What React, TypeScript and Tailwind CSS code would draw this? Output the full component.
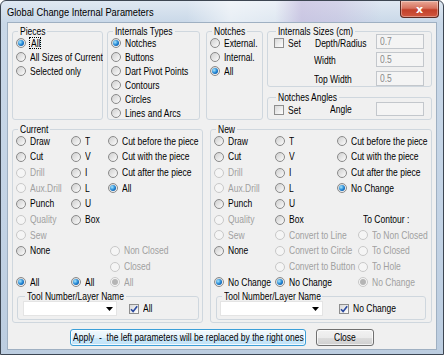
import { useLayoutEffect, useRef, useState } from 'react';
import type { ReactNode } from 'react';

const FONT = "font-['Liberation_Sans',Arial,sans-serif]";
const SX = 0.81;

// The dialog font is a narrow one; squeeze Liberation Sans and shrink its layout box to match.
function N({ children, pre }: { children: ReactNode; pre?: boolean }) {
  const ref = useRef<HTMLSpanElement>(null);
  const [mr, setMr] = useState(0);
  useLayoutEffect(() => {
    if (ref.current) setMr(-ref.current.offsetWidth * (1 - SX));
  }, []);
  return (
    <span
      ref={ref}
      className={`inline-block origin-left scale-x-[0.81] ${pre ? 'whitespace-pre' : 'whitespace-nowrap'}`}
      style={{ marginRight: mr }}
    >
      {children}
    </span>
  );
}

function Radio({
  label,
  checked,
  disabled,
  focus,
}: {
  label?: string;
  checked?: boolean;
  disabled?: boolean;
  focus?: boolean;
}) {
  return (
    <span className={`flex items-center gap-[4px] whitespace-nowrap ${disabled ? 'text-[#a0a0a0]' : 'text-black'}`}>
      <span
        className={`w-[10px] h-[10px] shrink-0 rounded-full border flex items-center justify-center ${
          disabled
            ? 'border-[#c8c8c8] bg-[#f5f5f5]'
            : 'border-[#8a8a8a] bg-[linear-gradient(135deg,#cfcfcf,#fcfcfc)]'
        }`}
      >
        {checked && (
          <span
            className={`w-[6px] h-[6px] rounded-full ${
              disabled
                ? 'bg-[#b5b5b5]'
                : 'bg-[radial-gradient(circle_at_35%_35%,#a8e8ff,#1a7fd0_55%,#0b3e86)]'
            }`}
          />
        )}
      </span>
      {label && (
        <span className={focus ? 'border border-dotted border-black leading-[10px] pl-[1px] -ml-[1px]' : ''}>
          <N>{label}</N>
        </span>
      )}
    </span>
  );
}

function Check({ label, checked }: { label: string; checked?: boolean }) {
  return (
    <span className="flex items-center gap-[4px] whitespace-nowrap">
      <span className="w-[10px] h-[10px] shrink-0 border border-[#8e8e8e] bg-[linear-gradient(135deg,#d8d8d8,#ffffff)] flex items-center justify-center">
        {checked && (
          <svg viewBox="0 0 8 8" className="w-[8px] h-[8px]">
            <path d="M1 4.3 L3.1 6.6 L7.2 1.2" stroke="#2b4aa0" strokeWidth="1.6" fill="none" />
          </svg>
        )}
      </span>
      <N>{label}</N>
    </span>
  );
}

function Group({ title, className, children }: { title: string; className?: string; children?: ReactNode }) {
  return (
    <fieldset className={`border border-[#cfd7de] rounded-[3px] min-w-0 ${className ?? ''}`}>
      <legend className="ml-[2px] px-[2px] leading-[12px]">
        <N>{title}</N>
      </legend>
      {children}
    </fieldset>
  );
}

function Field({ value, className }: { value?: string; className?: string }) {
  return (
    <div className={`w-[48px] border border-[#c3c7cc] bg-[#f4f4f4] text-[#8a8a8a] pl-[3px] flex items-center ${className ?? ''}`}>
      {value && <N>{value}</N>}
    </div>
  );
}

function Combo({ width }: { width: string }) {
  return (
    <div className={`${width} h-[15px] bg-white border border-[#e4e4e4] flex items-center justify-end pr-[3px]`}>
      <svg width="7" height="4" viewBox="0 0 7 4">
        <path d="M0 0h7L3.5 4z" fill="#000" />
      </svg>
    </div>
  );
}

const Row = ({ children, h = 'h-[14px]' }: { children: ReactNode; h?: string }) => (
  <div className={`flex items-center ${h}`}>{children}</div>
);

const MR = 'h-[15.67px]';

export default function App() {
  return (
    <div
      className={`${FONT} text-[10.5px] leading-[11px] w-[444px] h-[355px] overflow-hidden rounded-t-[6px] border border-[#3d4652] bg-[linear-gradient(180deg,#dfe8f2_0px,#c9d8e8_22px,#c3d3e5_60%,#bccde0)] flex flex-col`}
    >
      {/* Title bar */}
      <div className="h-[21px] flex items-start justify-between shrink-0 bg-[linear-gradient(90deg,transparent_42%,rgba(255,255,255,0.55)_52%,rgba(255,255,255,0.4)_62%,rgba(200,186,222,0.6)_68%,rgba(200,186,222,0.45)_76%,transparent_86%)]">
        <div className="pl-[6px] pt-[5px] text-[11.5px] leading-[13px] text-black">
          <N>Global Change Internal Parameters</N>
        </div>
        <div className="mr-[4px] w-[39px] h-[17px] rounded-b-[4px] border border-t-0 border-[#5c2a22] bg-[linear-gradient(180deg,#e9a997,#d7735f_45%,#c2402a_55%,#d0573f)] flex items-center justify-center shadow-[inset_0_0_0_1px_rgba(255,255,255,0.35)]">
          <span className="text-white font-bold text-[11px] leading-none font-['DejaVu_Sans',sans-serif]">x</span>
        </div>
      </div>

      {/* Client area */}
      <div className="mx-[6px] h-[328px] bg-[#f0f0f0] border border-[#9fb0c2] flex flex-col px-[4px] pt-[2px]">
        {/* Top groups */}
        <div className="flex h-[95px]">
          <Group title="Pieces" className="w-[92px] px-[3px]">
            <div className="-mt-[1px]">
              <Row><Radio label="All" checked focus /></Row>
              <Row><Radio label="All Sizes of Current" /></Row>
              <Row><Radio label="Selected only" /></Row>
            </div>
          </Group>
          <Group title="Internals Types" className="w-[94px] ml-[4px] px-[3px]">
            <div className="-mt-[1px]">
              <Row><Radio label="Notches" checked /></Row>
              <Row><Radio label="Buttons" /></Row>
              <Row><Radio label="Dart Pivot Points" /></Row>
              <Row><Radio label="Contours" /></Row>
              <Row><Radio label="Circles" /></Row>
              <Row><Radio label="Lines and Arcs" /></Row>
            </div>
          </Group>
          <Group title="Notches" className="w-[57px] ml-[6px] px-[3px]">
            <div className="-mt-[1px]">
              <Row><Radio label="External." /></Row>
              <Row><Radio label="Internal." /></Row>
              <Row><Radio label="All" checked /></Row>
            </div>
          </Group>
          <div className="ml-[4px] w-[167px] flex flex-col gap-[4px]">
            <Group title="Internals Sizes (cm)" className="h-[62px] pl-[6px]">
              <div className="-mt-[3.5px] flex flex-col gap-[3.5px]">
                <div className="flex items-center h-[15px]">
                  <div className="w-[40px] pt-[4px]"><Check label="Set" /></div>
                  <div className="w-[62px] pl-[1px] pt-[4px]"><N>Depth/Radius</N></div>
                  <Field value="0.7" className="h-[15px]" />
                </div>
                <div className="flex items-center h-[15px]">
                  <div className="w-[40px]" />
                  <div className="w-[62px] pt-[2px]"><N>Width</N></div>
                  <Field value="0.5" className="h-[15px]" />
                </div>
                <div className="flex items-center h-[15px]">
                  <div className="w-[40px]" />
                  <div className="w-[62px] pt-[2px]"><N>Top Width</N></div>
                  <Field value="0.5" className="h-[15px]" />
                </div>
              </div>
            </Group>
            <Group title="Notches Angles" className="flex-1 pl-[6px]">
              <div className="-mt-[1px] flex items-center h-[14px]">
                <div className="w-[40px] pt-[2px]"><Check label="Set" /></div>
                <div className="w-[62px] pl-[16px]"><N>Angle</N></div>
                <Field className="h-[14px]" />
              </div>
            </Group>
          </div>
        </div>

        {/* Current / New */}
        <div className="flex mt-[3px] h-[200px]">
          <Group title="Current" className="w-[191px] px-[3px]">
            <div className="-mt-[1.5px]">
              <Row h={MR}><div className="w-[55px]"><Radio label="Draw" /></div><div className="w-[37px]"><Radio label="T" /></div><Radio label="Cut before the piece" /></Row>
              <Row h={MR}><div className="w-[55px]"><Radio label="Cut" /></div><div className="w-[37px]"><Radio label="V" /></div><Radio label="Cut with the piece" /></Row>
              <Row h={MR}><div className="w-[55px]"><Radio label="Drill" disabled /></div><div className="w-[37px]"><Radio label="I" /></div><Radio label="Cut after the piece" /></Row>
              <Row h={MR}><div className="w-[55px]"><Radio label="Aux.Drill" disabled /></div><div className="w-[37px]"><Radio label="L" /></div><Radio label="All" checked /></Row>
              <Row h={MR}><div className="w-[55px]"><Radio label="Punch" /></div><div className="w-[37px]"><Radio label="U" /></div></Row>
              <Row h={MR}><div className="w-[55px]"><Radio label="Quality" disabled /></div><div className="w-[37px]"><Radio label="Box" /></div></Row>
              <Row h={MR}><div className="w-[55px]"><Radio label="Sew" disabled /></div></Row>
              <Row h={MR}><div className="w-[94px]"><Radio label="None" /></div><Radio label="Non Closed" disabled /></Row>
              <Row h={MR}><div className="w-[94px]" /><Radio label="Closed" disabled /></Row>
              <Row h={MR}><div className="w-[55px]"><Radio label="All" checked /></div><div className="w-[39px]"><Radio label="All" checked /></div><Radio label="All" checked disabled /></Row>
            </div>
            <Group title="Tool Number/Layer Name" className="ml-[1px] mr-0 h-[30px] pl-[5px] pr-[3px]">
              <div className="-mt-[1px] flex items-center">
                <Combo width="w-[94px]" />
                <div className="ml-[12px]"><Check label="All" checked /></div>
              </div>
            </Group>
          </Group>

          <Group title="New" className="w-[223px] ml-[7px] px-[3px]">
            <div className="-mt-[1.5px]">
              <Row h={MR}><div className="w-[61px]"><Radio label="Draw" /></div><div className="w-[62px]"><Radio label="T" /></div><Radio label="Cut before the piece" /></Row>
              <Row h={MR}><div className="w-[61px]"><Radio label="Cut" /></div><div className="w-[62px]"><Radio label="V" /></div><Radio label="Cut with the piece" /></Row>
              <Row h={MR}><div className="w-[61px]"><Radio label="Drill" disabled /></div><div className="w-[62px]"><Radio label="I" /></div><Radio label="Cut after the piece" /></Row>
              <Row h={MR}><div className="w-[61px]"><Radio label="Aux.Drill" disabled /></div><div className="w-[62px]"><Radio label="L" /></div><Radio label="No Change" checked /></Row>
              <Row h={MR}><div className="w-[61px]"><Radio label="Punch" /></div><div className="w-[62px]"><Radio label="U" /></div></Row>
              <Row h={MR}><div className="w-[61px]"><Radio label="Quality" disabled /></div><div className="w-[88px]"><Radio label="Box" /></div><N>To Contour :</N></Row>
              <Row h={MR}><div className="w-[61px]"><Radio label="Sew" disabled /></div><div className="w-[83px]"><Radio label="Convert to Line" disabled /></div><Radio label="To Non Closed" disabled /></Row>
              <Row h={MR}><div className="w-[61px]"><Radio label="None" /></div><div className="w-[83px]"><Radio label="Convert to Circle" disabled /></div><Radio label="To Closed" disabled /></Row>
              <Row h={MR}><div className="w-[61px]" /><div className="w-[83px]"><Radio label="Convert to Button" disabled /></div><Radio label="To Hole" disabled /></Row>
              <Row h={MR}><div className="w-[61px]"><Radio label="No Change" checked /></div><div className="w-[83px]"><Radio label="No Change" checked /></div><Radio label="No Change" checked disabled /></Row>
            </div>
            <Group title="Tool Number/Layer Name" className="ml-[2px] mr-[2px] h-[30px] pl-[3px] pr-[3px]">
              <div className="-mt-[1px] flex items-center">
                <Combo width="w-[103px]" />
                <div className="ml-[16px]"><Check label="No Change" checked /></div>
              </div>
            </Group>
          </Group>
        </div>

        {/* Buttons */}
        <div className="flex mt-[6px] ml-[58px] gap-[10px]">
          <button className="w-[236px] h-[17px] rounded-[3px] border border-[#3c9fd8] bg-[linear-gradient(180deg,#f2f9fd,#e3f3fc_50%,#cfeafb_50%,#bfe2f7)] shadow-[inset_0_0_0_1px_rgba(255,255,255,0.8)] text-black leading-none flex items-center justify-center">
            <N pre>Apply  -  the left parameters will be replaced by the right ones</N>
          </button>
          <button className="w-[58px] h-[17px] rounded-[3px] border border-[#707070] bg-[linear-gradient(180deg,#f2f2f2,#ebebeb_50%,#dddddd_50%,#cfcfcf)] shadow-[inset_0_0_0_1px_rgba(255,255,255,0.7)] text-black leading-none flex items-center justify-center">
            <N>Close</N>
          </button>
        </div>
      </div>
    </div>
  );
}
